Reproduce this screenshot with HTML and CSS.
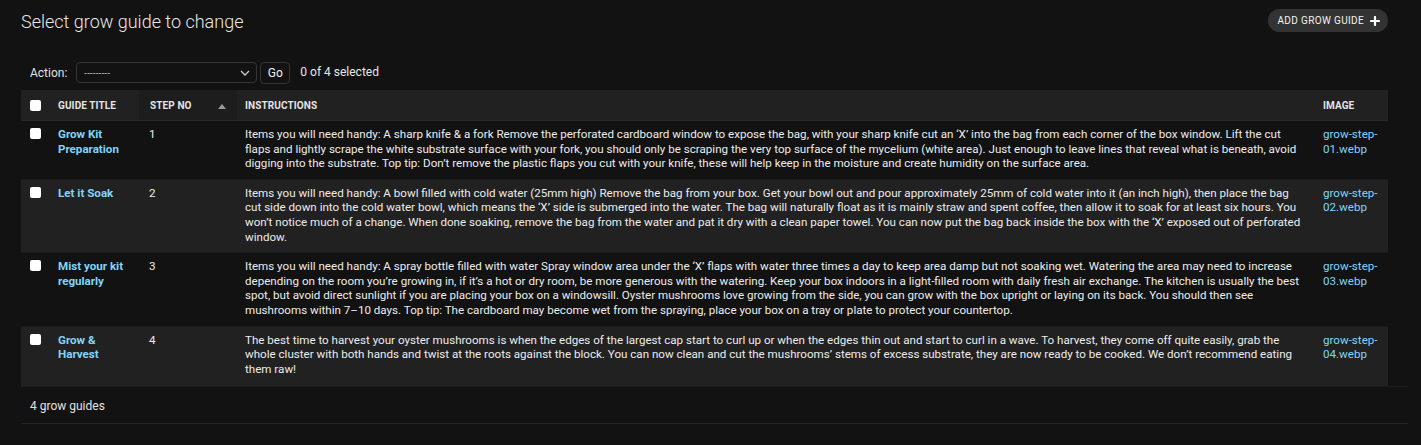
FILE: index.html
```html
<!DOCTYPE html>
<html lang="en">
<head>
<meta charset="utf-8">
<title>Select grow guide to change</title>
<link rel="stylesheet" href="styles.css">
</head>
<body>
<div class="content">
  <div class="top">
    <h1 class="title">Select grow guide to change</h1>
    <a class="add-btn" href="#">ADD GROW GUIDE
      <svg class="plus" width="10" height="10" viewBox="0 0 10 10"><path d="M5 1v8M1 5h8" stroke="#fff" stroke-width="2.2" stroke-linecap="round"/></svg>
    </a>
  </div>
  <div class="actions">
    <label class="action-label">Action:</label>
    <div class="select">
      <span class="dashes">---------</span>
      <svg class="chev" width="10" height="6" viewBox="0 0 10 6"><path d="M1 1l4 4 4-4" fill="none" stroke="#ccc" stroke-width="1.3"/></svg>
    </div>
    <button class="go">Go</button>
    <span class="counter">0 of 4 selected</span>
  </div>
  <table class="results">
    <colgroup>
      <col class="c-check"><col class="c-title"><col class="c-step"><col class="c-instr"><col class="c-img">
    </colgroup>
    <thead>
      <tr>
        <th class="th-check"><span class="cb"></span></th>
        <th>GUIDE TITLE</th>
        <th class="sorted"><div class="sorted-wrap"><span>STEP NO</span><span class="arrow"></span></div></th>
        <th>INSTRUCTIONS</th>
        <th>IMAGE</th>
      </tr>
    </thead>
    <tbody>
      <tr class="row1">
        <td class="td-check"><span class="cb"></span></td>
        <td><a class="link" href="#">Grow Kit Preparation</a></td>
        <td>1</td>
        <td>Items you will need handy: A sharp knife &amp; a fork Remove the perforated cardboard window to expose the bag, with your sharp knife cut an ‘X’ into the bag from each corner of the box window. Lift the cut flaps and lightly scrape the white substrate surface with your fork, you should only be scraping the very top surface of the mycelium (white area). Just enough to leave lines that reveal what is beneath, avoid digging into the substrate. Top tip: Don’t remove the plastic flaps you cut with your knife, these will help keep in the moisture and create humidity on the surface area.</td>
        <td><a class="img-link" href="#">grow-step-01.webp</a></td>
      </tr>
      <tr class="row2">
        <td class="td-check"><span class="cb"></span></td>
        <td><a class="link" href="#">Let it Soak</a></td>
        <td>2</td>
        <td>Items you will need handy: A bowl filled with cold water (25mm high) Remove the bag from your box. Get your bowl out and pour approximately 25mm of cold water into it (an inch high), then place the bag cut side down into the cold water bowl, which means the ‘X’ side is submerged into the water. The bag will naturally float as it is mainly straw and spent coffee, then allow it to soak for at least six hours. You won’t notice much of a change. When done soaking, remove the bag from the water and pat it dry with a clean paper towel. You can now put the bag back inside the box with the ‘X’ exposed out of perforated window.</td>
        <td><a class="img-link" href="#">grow-step-02.webp</a></td>
      </tr>
      <tr class="row1">
        <td class="td-check"><span class="cb"></span></td>
        <td><a class="link" href="#">Mist your kit regularly</a></td>
        <td>3</td>
        <td>Items you will need handy: A spray bottle filled with water Spray window area under the ‘X’ flaps with water three times a day to keep area damp but not soaking wet. Watering the area may need to increase depending on the room you’re growing in, if it’s a hot or dry room, be more generous with the watering. Keep your box indoors in a light-filled room with daily fresh air exchange. The kitchen is usually the best spot, but avoid direct sunlight if you are placing your box on a windowsill. Oyster mushrooms love growing from the side, you can grow with the box upright or laying on its back. You should then see mushrooms within 7–10 days. Top tip: The cardboard may become wet from the spraying, place your box on a tray or plate to protect your countertop.</td>
        <td><a class="img-link" href="#">grow-step-03.webp</a></td>
      </tr>
      <tr class="row2 last">
        <td class="td-check"><span class="cb"></span></td>
        <td><a class="link" href="#">Grow &amp; Harvest</a></td>
        <td>4</td>
        <td>The best time to harvest your oyster mushrooms is when the edges of the largest cap start to curl up or when the edges thin out and start to curl in a wave. To harvest, they come off quite easily, grab the whole cluster with both hands and twist at the roots against the block. You can now clean and cut the mushrooms’ stems of excess substrate, they are now ready to be cooked. We don’t recommend eating them raw!</td>
        <td><a class="img-link" href="#">grow-step-04.webp</a></td>
      </tr>
    </tbody>
  </table>
  <p class="paginator">4 grow guides</p>
</div>
</body>
</html>
```
FILE: styles.css
```css
html, body {
  margin: 0;
  padding: 0;
  background: #121212;
  color: #eeeeee;
  font-family: Roboto, "Liberation Sans", Arial, sans-serif;
}

.content {
  padding: 8px 13px 0 21px;
}

.top {
  display: flex;
  justify-content: space-between;
  align-items: flex-start;
  width: 1367px;
}

.title {
  margin: 3px 0 0 0;
  font-size: 18px;
  font-weight: 300;
  color: #e8e8e8;
  line-height: 22px;
}

.add-btn {
  display: flex;
  align-items: center;
  gap: 6px;
  height: 23px;
  padding: 0 8px 0 10px;
  background: #333333;
  border-radius: 12px;
  color: #f2f2f2;
  text-decoration: none;
  font-size: 10px;
  letter-spacing: 0.35px;
  font-weight: 400;
  box-sizing: border-box;
  margin-top: 1px;
}

.plus {
  display: block;
}

.actions {
  display: flex;
  align-items: center;
  margin-top: 29px;
  padding-left: 9px;
  height: 21px;
  font-size: 12px;
}

.action-label {
  color: #e0e0e0;
  margin-right: 9px;
}

.select {
  width: 181px;
  height: 21px;
  box-sizing: border-box;
  border: 1px solid #353535;
  border-radius: 4px;
  display: flex;
  align-items: center;
  justify-content: space-between;
  padding: 0 6px 0 7px;
}

.dashes {
  font-size: 9px;
  letter-spacing: 0.4px;
  color: #ddd;
}

.chev {
  display: block;
}

.go {
  margin-left: 3px;
  height: 22px;
  width: 30px;
  background: #121212;
  border: 1px solid #353535;
  border-radius: 4px;
  color: #eeeeee;
  font-family: inherit;
  font-size: 12px;
  padding: 0;
}

.counter {
  margin-left: 10px;
  color: #e6e6e6;
  position: relative;
  top: -1px;
}

.results {
  margin-top: 7px;
  width: 1367px;
  border-collapse: collapse;
  table-layout: fixed;
}

.c-check { width: 29px; }
.c-title { width: 89px; }
.c-step { width: 98px; }
.c-instr { width: 1078px; }
.c-img { width: 73px; }

thead th {
  background: #212121;
  height: 30px;
  padding: 0 8px;
  font-size: 10px;
  font-weight: 700;
  color: #e4e4e4;
  text-align: left;
  vertical-align: middle;
  letter-spacing: 0.1px;
}

thead th.sorted {
  background: #1d1d1d;
  padding-left: 11px;
}

.sorted-wrap {
  display: flex;
  justify-content: space-between;
  align-items: center;
}

.arrow {
  width: 0;
  height: 0;
  border-left: 4px solid transparent;
  border-right: 4px solid transparent;
  border-bottom: 5px solid #9a9a9a;
  margin-right: 3px;
  margin-top: 3px;
}

.th-check, .td-check {
  padding-left: 9px !important;
  padding-right: 0 !important;
}

.cb {
  display: block;
  width: 11px;
  height: 11px;
  background: #ffffff;
  border-radius: 2px;
}

tbody td {
  padding: 6px 8px 8px 8px;
  font-size: 11.6px;
  line-height: 14.6px;
  vertical-align: top;
  color: #ececec;
  border-top: 1px solid #1a1a1a;
}

tbody td.td-check {
  padding-top: 7px;
}

tbody tr.last td {
  padding-bottom: 10px;
}

tbody tr:nth-child(1) td {
  border-top: 1px solid #2a2a2a;
}

.row1 td { background: #121212; }
.row2 td { background: #212121; }

tbody td:nth-child(3) {
  padding-left: 10px;
}

.link {
  color: #81d4fa;
  font-weight: 700;
  text-decoration: none;
}

.img-link {
  color: #81d4fa;
  text-decoration: none;
}

.paginator {
  margin: 0;
  width: 1378px;
  padding: 12px 0 0 9px;
  height: 24px;
  box-sizing: content-box;
  font-size: 12px;
  color: #e0e0e0;
  border-top: 1px solid #1c1c1c;
  border-bottom: 1px solid #242424;
}
```
